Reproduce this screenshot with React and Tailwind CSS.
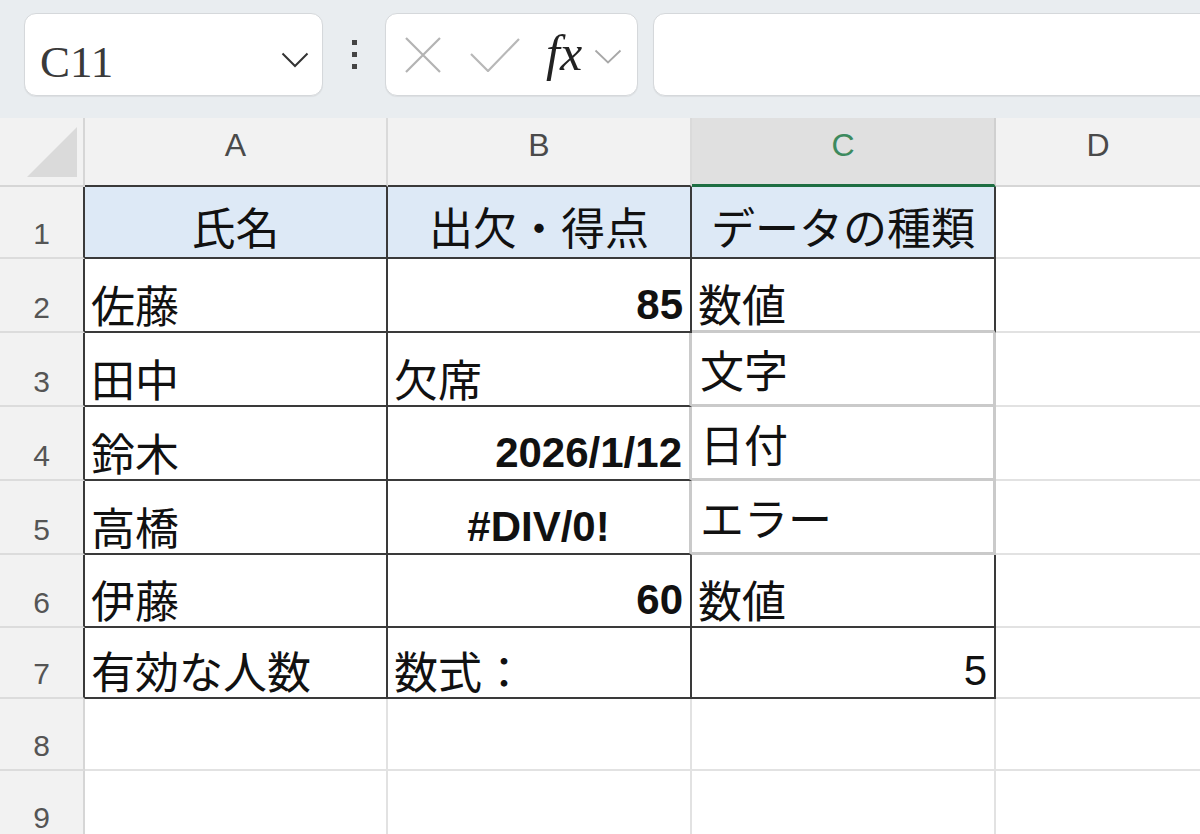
import React from "react";

const CJK = "font-['Noto_Sans_CJK_JP',sans-serif] text-[44px] leading-none text-[#111] whitespace-nowrap";
const NUMB = "font-['Liberation_Sans',Arial,sans-serif] text-[42px] font-bold leading-none text-[#111] whitespace-nowrap";
const NUMR = "font-['Liberation_Sans',Arial,sans-serif] text-[42px] leading-none text-[#111]";
const COLH = "font-['Liberation_Sans',Arial,sans-serif] text-[32px] leading-none text-[#4a4a4a]";
const ROWH = "font-['Liberation_Sans',Arial,sans-serif] text-[30px] leading-none text-[#555]";

const DR = "border-r-2 border-r-[#3a3a3a]";
const DB = "border-b-2 border-b-[#3a3a3a]";
const LR = "border-r-2 border-r-[#e2e2e2]";
const LB = "border-b-2 border-b-[#e2e2e2]";
const GR = "border-r-[3px] border-r-[#cacaca]";
const GB = "border-b-[3px] border-b-[#cacaca]";

function C({ cls, children }) {
  return <div className={"flex min-w-0 " + cls}>{children}</div>;
}

function RowHead({ n, dark }) {
  return (
    <C cls={"bg-[#f2f2f2] border-b-2 border-b-[#dcdcdc] items-end justify-center pb-[8px] " + (dark ? DR : "border-r-2 border-r-[#d6d6d6]")}>
      <span className={ROWH}>{n}</span>
    </C>
  );
}

const L = "items-end pl-[6px] pb-[5px]";
const R = "items-end justify-end pr-[7px] pb-[5px]";
const M = "items-end justify-center pb-[5px]";
const V = "items-center pl-[8px]";

export default function App() {
  return (
    <div className="w-[1200px] h-[834px] overflow-hidden bg-white flex flex-col">
      {/* toolbar */}
      <div className="h-[118px] shrink-0 bg-[#e9edf0] flex items-start pt-[13px] pl-[24px] overflow-hidden">
        <div className="w-[299px] h-[83px] shrink-0 bg-white rounded-[12px] border border-[#d5d8db] shadow-[0_1px_1px_rgba(0,0,0,0.06)] flex items-center justify-between pl-[15px] pr-[13px]">
          <span className="font-['Liberation_Serif',serif] text-[45px] leading-none text-[#3a3a3a] pt-[16px]">C11</span>
          <svg width="28" height="16" viewBox="0 0 28 16" className="mt-[10px]">
            <path d="M1.5 1.5 L14 14 L26.5 1.5" fill="none" stroke="#333" strokeWidth="2" />
          </svg>
        </div>
        <div className="w-[62px] h-[83px] shrink-0 flex flex-col items-center justify-center gap-[7px]">
          <div className="w-[5px] h-[5px] bg-[#444]" />
          <div className="w-[5px] h-[5px] bg-[#444]" />
          <div className="w-[5px] h-[5px] bg-[#444]" />
        </div>
        <div className="w-[253px] h-[83px] shrink-0 bg-white rounded-[12px] border border-[#d5d8db] shadow-[0_1px_1px_rgba(0,0,0,0.06)] flex items-center pl-[19px]">
          <svg width="36" height="36" viewBox="0 0 36 36">
            <path d="M1 1 L35 35 M35 1 L1 35" fill="none" stroke="#b3b3b3" strokeWidth="2.2" />
          </svg>
          <svg width="50" height="34" viewBox="0 0 50 34" className="ml-[29px]">
            <path d="M1 16 L18 33 L49 1" fill="none" stroke="#b8b8b8" strokeWidth="2.2" />
          </svg>
          <span className="ml-[26px] font-['Liberation_Serif',serif] italic text-[50px] leading-none text-[#222] pb-[4px]">fx</span>
          <svg width="28" height="15" viewBox="0 0 28 15" className="ml-[12px] mt-[4px]">
            <path d="M1.5 1.5 L14 13.5 L26.5 1.5" fill="none" stroke="#a8a8a8" strokeWidth="1.8" />
          </svg>
        </div>
        <div className="w-[600px] h-[83px] shrink-0 ml-[15px] bg-white rounded-[12px] border border-[#d5d8db] shadow-[0_1px_1px_rgba(0,0,0,0.06)]" />
      </div>

      {/* sheet */}
      <div className="grid grid-cols-[85px_303px_304px_304px_1fr] grid-rows-[69px_72px_74px_74px_74px_74px_73px_71px_72px_72px]">
        {/* header row */}
        <C cls="bg-[#f2f2f2] border-r-2 border-r-[#d6d6d6] border-b-2 border-b-[#d6d6d6] items-start pl-[27px] pt-[9px]">
          <svg width="50" height="50" viewBox="0 0 50 50">
            <polygon points="50,0 50,50 0,50" fill="#dadada" />
          </svg>
        </C>
        <C cls={"bg-[#f2f2f2] border-r-2 border-r-[#dadada] justify-center pt-[11px] " + DB}>
          <span className={COLH}>A</span>
        </C>
        <C cls={"bg-[#f2f2f2] border-r-2 border-r-[#dadada] justify-center pt-[11px] " + DB}>
          <span className={COLH}>B</span>
        </C>
        <C cls="bg-[#e0e0e0] border-r-2 border-r-[#d0d0d0] border-b-[3px] border-b-[#1e6e42] justify-center pt-[11px]">
          <span className="font-['Liberation_Sans',Arial,sans-serif] text-[32px] leading-none text-[#3d8a5e]">C</span>
        </C>
        <C cls="bg-[#f2f2f2] border-b-2 border-b-[#d6d6d6] justify-center pt-[11px]">
          <span className={COLH}>D</span>
        </C>

        {/* row 1 */}
        <RowHead n="1" dark />
        <C cls={"bg-[#dde9f6] pb-[9px] " + M + " " + DR + " " + DB}><span className={CJK}>氏名</span></C>
        <C cls={"bg-[#dde9f6] pb-[9px] " + M + " " + DR + " " + DB}><span className={CJK}>出欠・得点</span></C>
        <C cls={"bg-[#dde9f6] pb-[9px] " + M + " " + DR + " " + DB}><span className={CJK}>データの種類</span></C>
        <C cls={LB} />

        {/* row 2 */}
        <RowHead n="2" dark />
        <C cls={L + " " + DR + " " + DB}><span className={CJK}>佐藤</span></C>
        <C cls={R + " " + DR + " " + DB}><span className={NUMB}>85</span></C>
        <C cls={L + " " + DR + " " + GB}><span className={CJK}>数値</span></C>
        <C cls={LB} />

        {/* row 3 */}
        <RowHead n="3" dark />
        <C cls={L + " " + DR + " " + DB}><span className={CJK}>田中</span></C>
        <C cls={L + " " + GR + " " + DB}><span className={CJK}>欠席</span></C>
        <C cls={V + " " + GR + " " + GB}><span className={CJK}>文字</span></C>
        <C cls={LB} />

        {/* row 4 */}
        <RowHead n="4" dark />
        <C cls={L + " " + DR + " " + DB}><span className={CJK}>鈴木</span></C>
        <C cls={R + " " + GR + " " + DB}><span className={NUMB}>2026/1/12</span></C>
        <C cls={V + " " + GR + " " + GB}><span className={CJK}>日付</span></C>
        <C cls={LB} />

        {/* row 5 */}
        <RowHead n="5" dark />
        <C cls={L + " " + DR + " " + DB}><span className={CJK}>高橋</span></C>
        <C cls={M + " " + GR + " " + DB}><span className={NUMB}>#DIV/0!</span></C>
        <C cls={V + " " + GR + " " + GB}><span className={CJK}>エラー</span></C>
        <C cls={LB} />

        {/* row 6 */}
        <RowHead n="6" dark />
        <C cls={L + " " + DR + " " + DB}><span className={CJK}>伊藤</span></C>
        <C cls={R + " " + DR + " " + DB}><span className={NUMB}>60</span></C>
        <C cls={L + " " + DR + " " + DB}><span className={CJK}>数値</span></C>
        <C cls={LB} />

        {/* row 7 */}
        <RowHead n="7" dark />
        <C cls={L + " " + DR + " " + DB}><span className={CJK}>有効な人数</span></C>
        <C cls={L + " " + DR + " " + DB}><span className={CJK}>数式：</span></C>
        <C cls={R + " " + DR + " " + DB}><span className={NUMR}>5</span></C>
        <C cls={LB} />

        {/* row 8 */}
        <RowHead n="8" />
        <C cls={LR + " " + LB} />
        <C cls={LR + " " + LB} />
        <C cls={LR + " " + LB} />
        <C cls={LB} />

        {/* row 9 */}
        <RowHead n="9" />
        <C cls={LR + " " + LB} />
        <C cls={LR + " " + LB} />
        <C cls={LR + " " + LB} />
        <C cls={LB} />
      </div>
    </div>
  );
}
